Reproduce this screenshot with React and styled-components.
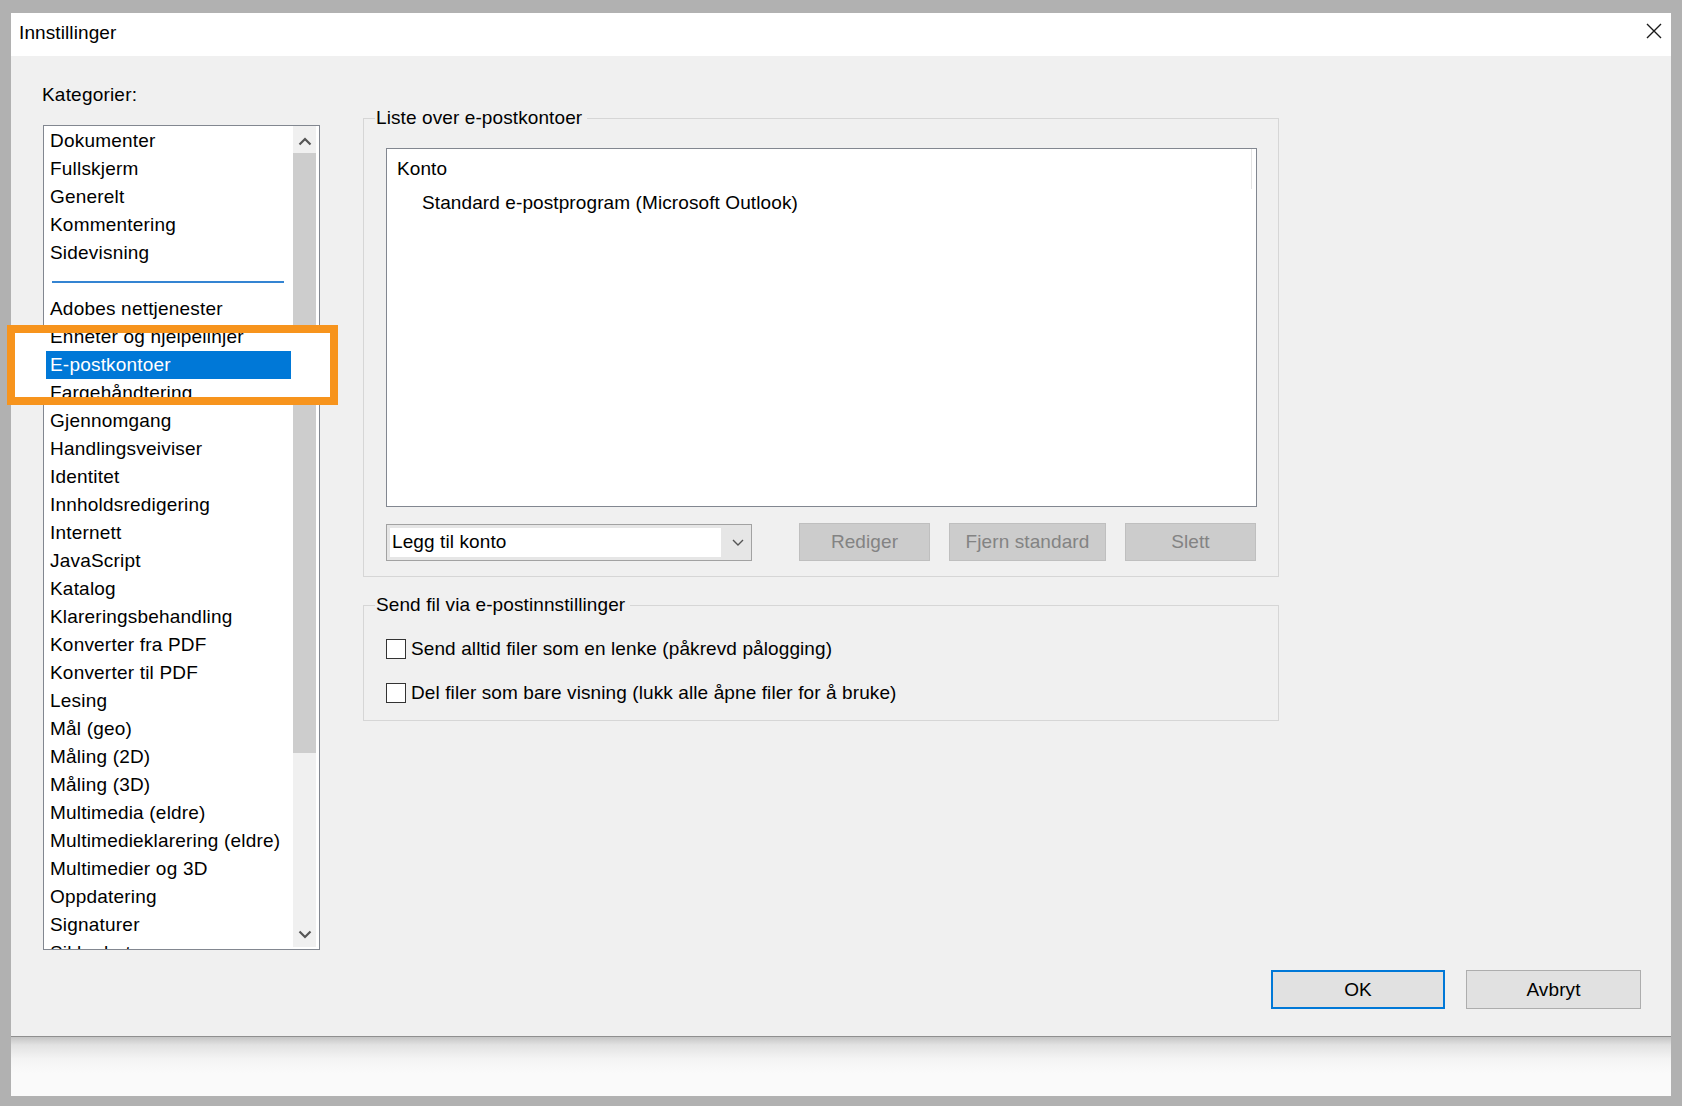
import React from 'react';
import styled, { createGlobalStyle } from 'styled-components';

const GlobalStyle = createGlobalStyle`
  html, body {
    margin: 0;
    padding: 0;
  }
  body {
    background: #b1b1b1;
    font-family: "Liberation Sans", Arial, sans-serif;
  }
  * {
    box-sizing: border-box;
  }
`;

const Page = styled.div`
  position: relative;
  width: 1682px;
  height: 1106px;
  padding: 13px 11px 10px;
  display: flex;
  flex-direction: column;
  background: #b1b1b1;
  font-family: "Liberation Sans", Arial, sans-serif;
  font-size: 19px;
  letter-spacing: 0.1px;
  color: #000;
`;

const Dialog = styled.div`
  height: 1024px;
  display: flex;
  flex-direction: column;
  background: #f0f0f0;
  border-bottom: 1px solid #8f8f8f;
`;

const TitleBar = styled.div`
  height: 43px;
  flex: none;
  background: #fff;
  display: flex;
  justify-content: space-between;
  align-items: flex-start;
  padding: 10px 9px 0 8px;
`;

const Title = styled.div`
  font-size: 19px;
  line-height: 20px;
`;

const Body = styled.div`
  flex: 1;
  display: flex;
  flex-direction: column;
`;

const Main = styled.div`
  display: flex;
  gap: 43px;
  padding: 28px 0 0 32px;
`;

const LeftCol = styled.div`
  width: 277px;
  display: flex;
  flex-direction: column;
`;

const CatLabel = styled.div`
  line-height: 22px;
  margin: 0 0 19px -1px;
  letter-spacing: 0.2px;
`;

const ListBox = styled.div`
  height: 825px;
  border: 1px solid #828790;
  background: #fff;
  display: flex;
  overflow: hidden;
`;

const Items = styled.div`
  flex: 1;
  min-width: 0;
  margin: 1px 2px 0;
  overflow: hidden;
`;

const Item = styled.div`
  position: relative;
  z-index: 2;
  height: 28px;
  line-height: 28px;
  padding-left: 4px;
  white-space: nowrap;
  letter-spacing: 0.2px;
  background: ${p => (p.$selected ? '#0078d7' : 'transparent')};
  color: ${p => (p.$selected ? '#fff' : '#000')};
`;

const SeparatorRow = styled.div`
  height: 28px;
  padding-top: 14px;
`;

const SeparatorLine = styled.div`
  margin-left: 6px;
  width: 232px;
  height: 2px;
  background: #3484d2;
`;

const ScrollBar = styled.div`
  width: 23px;
  margin: 0 3px 2px 0;
  display: flex;
  flex-direction: column;
  background: #f0f0f0;
`;

const ScrollButton = styled.div`
  height: 27px;
  display: flex;
  align-items: center;
  justify-content: center;
  padding-top: ${p => (p.$up ? '4px' : '1px')};
`;

const Thumb = styled.div`
  height: 600px;
  background: #cdcdcd;
`;

const Track = styled.div`
  flex: 1;
`;

const RightCol = styled.div`
  width: 916px;
  padding-top: 23px;
  display: flex;
  flex-direction: column;
`;

const Group = styled.fieldset`
  width: 916px;
  min-width: 0;
  margin: ${p => p.$mt || 0}px 0 0;
  padding: 0 21px ${p => p.$pb}px 11px;
  border: 1px solid #d6d6d6;
`;

const Legend = styled.legend`
  padding: 0 5px 0 1px;
  line-height: 22px;
  font-size: 19px;
`;

const GroupBody = styled.div`
  padding-left: 11px;
  display: flex;
  flex-direction: column;
`;

const ListView = styled.div`
  margin-top: 19px;
  height: 359px;
  border: 1px solid #828790;
  background: #fff;
`;

const ListHeader = styled.div`
  display: flex;
  height: 40px;
`;

const HeaderCell = styled.div`
  flex: 1;
  line-height: 40px;
  padding-left: 10px;
  margin-right: 4px;
  border-right: 1px solid #e3e3e3;
`;

const ListRow = styled.div`
  line-height: 28px;
  padding-left: 35px;
`;

const Controls = styled.div`
  margin-top: 16px;
  height: 38px;
  display: flex;
  align-items: center;
  justify-content: space-between;
  padding-right: 1px;
`;

const Combo = styled.div`
  width: 366px;
  height: 37px;
  border: 1px solid #a2a2a2;
  background: #e6e6e6;
  padding: 3px 0 3px 3px;
  display: flex;
`;

const ComboField = styled.div`
  flex: 1;
  background: #fff;
  line-height: 28px;
  padding-left: 2px;
`;

const ComboArrow = styled.div`
  width: 30px;
  padding-left: 4px;
  display: flex;
  align-items: center;
  justify-content: center;
`;

const ButtonGroup = styled.div`
  display: flex;
  gap: 19px;
`;

const FlatButton = styled.button`
  width: ${p => p.$w}px;
  height: ${p => p.$h || 38}px;
  padding: 0;
  font-family: "Liberation Sans", Arial, sans-serif;
  font-size: 19px;
  letter-spacing: 0.1px;
  background: ${p => (p.$disabled ? '#cccccc' : '#e1e1e1')};
  color: ${p => (p.$disabled ? '#838383' : '#000')};
  border: ${p => (p.$primary ? '2px solid #0078d7' : p.$disabled ? '1px solid #bfbfbf' : '1px solid #adadad')};
`;

const CheckRow = styled.div`
  height: 28px;
  margin-top: ${p => (p.$first ? 19 : 16)}px;
  display: flex;
  align-items: center;
  gap: 5px;
  white-space: nowrap;
`;

const CheckBox = styled.span`
  width: 20px;
  height: 20px;
  flex: none;
  border: 1px solid #333;
  background: #fff;
`;

const Footer = styled.div`
  margin-top: auto;
  display: flex;
  justify-content: flex-end;
  gap: 21px;
  padding: 0 30px 27px 0;
`;

const Below = styled.div`
  flex: 1;
  background: linear-gradient(to bottom, #c4c4c4 0px, #e2e2e2 8px, #f4f4f4 22px, #fafafa 36px);
`;

const Annotation = styled.div`
  position: absolute;
  left: 7px;
  top: 325px;
  width: 331px;
  height: 80px;

  &::before {
    content: '';
    position: absolute;
    inset: 0;
    background: #fff;
    z-index: 1;
  }

  &::after {
    content: '';
    position: absolute;
    inset: 0;
    border: 8px solid #f7941d;
    z-index: 3;
  }
`;

const Chevron = ({ up }) => (
  <svg width="14" height="9" viewBox="0 0 14 9">
    <polyline
      points={up ? '1.5,7.5 7,2 12.5,7.5' : '1.5,1.5 7,7 12.5,1.5'}
      fill="none"
      stroke="#555"
      strokeWidth="2.2"
    />
  </svg>
);

const categories = [
  'Dokumenter',
  'Fullskjerm',
  'Generelt',
  'Kommentering',
  'Sidevisning',
  '-',
  'Adobes nettjenester',
  'Enheter og hjelpelinjer',
  'E-postkontoer',
  'Fargehåndtering',
  'Gjennomgang',
  'Handlingsveiviser',
  'Identitet',
  'Innholdsredigering',
  'Internett',
  'JavaScript',
  'Katalog',
  'Klareringsbehandling',
  'Konverter fra PDF',
  'Konverter til PDF',
  'Lesing',
  'Mål (geo)',
  'Måling (2D)',
  'Måling (3D)',
  'Multimedia (eldre)',
  'Multimedieklarering (eldre)',
  'Multimedier og 3D',
  'Oppdatering',
  'Signaturer',
  'Sikkerhet',
];

const App = () => {
  return (
    <Page>
      <GlobalStyle />
      <Dialog>
        <TitleBar>
          <Title>Innstillinger</Title>
          <svg width="16" height="16" viewBox="0 0 16 16">
            <path d="M1 1L15 15M15 1L1 15" stroke="#1a1a1a" strokeWidth="1.4" fill="none" />
          </svg>
        </TitleBar>

        <Body>
          <Main>
            <LeftCol>
              <CatLabel>Kategorier:</CatLabel>
              <ListBox>
                <Items>
                  {categories.map((c, i) =>
                    c === '-' ? (
                      <SeparatorRow key={i}>
                        <SeparatorLine />
                      </SeparatorRow>
                    ) : (
                      <Item key={i} $selected={c === 'E-postkontoer'}>
                        {c}
                      </Item>
                    )
                  )}
                </Items>
                <ScrollBar>
                  <ScrollButton $up>
                    <Chevron up />
                  </ScrollButton>
                  <Thumb />
                  <Track />
                  <ScrollButton>
                    <Chevron />
                  </ScrollButton>
                </ScrollBar>
              </ListBox>
            </LeftCol>

            <RightCol>
              <Group $pb={15}>
                <Legend>Liste over e-postkontoer</Legend>
                <GroupBody>
                  <ListView>
                    <ListHeader>
                      <HeaderCell>Konto</HeaderCell>
                    </ListHeader>
                    <ListRow>Standard e-postprogram (Microsoft Outlook)</ListRow>
                  </ListView>
                  <Controls>
                    <Combo>
                      <ComboField>Legg til konto</ComboField>
                      <ComboArrow>
                        <svg width="12" height="7" viewBox="0 0 12 7">
                          <polyline points="1,1 6,6 11,1" fill="none" stroke="#555" strokeWidth="1.4" />
                        </svg>
                      </ComboArrow>
                    </Combo>
                    <ButtonGroup>
                      <FlatButton $w={131} $disabled>Rediger</FlatButton>
                      <FlatButton $w={157} $disabled>Fjern standard</FlatButton>
                      <FlatButton $w={131} $disabled>Slett</FlatButton>
                    </ButtonGroup>
                  </Controls>
                </GroupBody>
              </Group>

              <Group $mt={17} $pb={13}>
                <Legend>Send fil via e-postinnstillinger</Legend>
                <GroupBody>
                  <CheckRow $first>
                    <CheckBox />
                    Send alltid filer som en lenke (påkrevd pålogging)
                  </CheckRow>
                  <CheckRow>
                    <CheckBox />
                    Del filer som bare visning (lukk alle åpne filer for å bruke)
                  </CheckRow>
                </GroupBody>
              </Group>
            </RightCol>
          </Main>

          <Footer>
            <FlatButton $w={174} $h={39} $primary>OK</FlatButton>
            <FlatButton $w={175} $h={39}>Avbryt</FlatButton>
          </Footer>
        </Body>
      </Dialog>
      <Below />
      <Annotation />
    </Page>
  );
};

export default App;
